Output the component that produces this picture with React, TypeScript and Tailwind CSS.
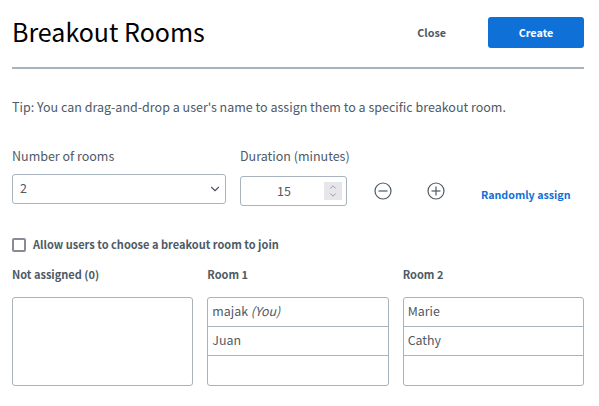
import { ChevronDown, ChevronUp } from "lucide-react";

const font = { fontFamily: '"Noto Sans CJK JP", "Source Sans Pro", "Noto Sans", sans-serif' };

function RoundIcon({ plus = false }: { plus?: boolean }) {
  return (
    <svg width="18" height="18" viewBox="0 0 18 18" fill="none" stroke="#4e5a66" strokeWidth="1.2">
      <circle cx="9" cy="9" r="8" />
      <path d="M4.5 9h9" />
      {plus && <path d="M9 4.5v9" />}
    </svg>
  );
}

function Room({ title, users }: { title: string; users?: React.ReactNode[] }) {
  return (
    <div>
      <div className="text-[11px] leading-[20px] font-bold text-[#4e5a66]">{title}</div>
      <div className="mt-[13px] flex h-[89px] flex-col rounded-[3px] border border-[#a7b3bd]">
        {users?.map((user, i) => (
          <div
            key={i}
            className="flex h-[29px] shrink-0 items-center border-b border-[#a7b3bd] px-[4px] pb-[2px] text-[12.4px] text-[#4e5a66]"
          >
            {user}
          </div>
        ))}
      </div>
    </div>
  );
}

export default function App() {
  return (
    <div className="h-[406px] w-[599px] overflow-hidden bg-white pr-[15px] pl-[12px]" style={font}>
      <header className="flex items-center border-b-2 border-[#a7b3bd] pt-[17px] pb-[19px]">
        <h1 className="-mt-[3px] flex-1 text-[25px] leading-[31px] text-black">Breakout Rooms</h1>
        <button className="mr-[42px] text-[10.8px] font-bold text-[#4e5a66]">Close</button>
        <button className="h-[31px] w-[96px] rounded-[3px] bg-[#0f70d7] text-[10.8px] font-bold text-white">
          Create
        </button>
      </header>

      <p className="mt-[28px] text-[12.5px] leading-[20px] text-[#4e5a66]">
        Tip: You can drag-and-drop a user's name to assign them to a specific breakout room.
      </p>

      <div className="mt-[29px] flex items-start">
        <div className="w-[214px] shrink-0">
          <div className="text-[12.5px] leading-[20px] text-[#4e5a66]">Number of rooms</div>
          <div className="mt-[8px] flex h-[30px] items-center justify-between rounded-[3px] border border-[#a7b3bd] pr-[3px] pl-[7px] text-[12.5px] text-[#4e5a66]">
            <span className="-mt-[1px]">2</span>
            <ChevronDown size={14} strokeWidth={2} />
          </div>
        </div>
        <div className="ml-[14px] w-[107px] shrink-0">
          <div className="text-[12.5px] leading-[20px] whitespace-nowrap text-[#4e5a66]">Duration (minutes)</div>
          <div className="mt-[10px] flex h-[30px] items-center justify-end rounded-[3px] border border-[#a7b3bd] pr-[4px] text-[12.5px] text-[#4e5a66]">
            <span className="mr-[33px]">15</span>
            <span className="flex h-[18px] w-[18px] flex-col items-center justify-center bg-[#e6e6eb] text-[#8a8f96]">
              <ChevronUp size={10} strokeWidth={2} className="-mb-[1px]" />
              <ChevronDown size={10} strokeWidth={2} className="-mt-[1px]" />
            </span>
          </div>
        </div>
        <div className="mt-[36px] ml-[27px] flex shrink-0 gap-[35px]">
          <RoundIcon />
          <RoundIcon plus />
        </div>
        <button className="mt-[39px] ml-[36px] text-[10.7px] leading-[20px] font-bold whitespace-nowrap text-[#0f70d7]">
          Randomly assign
        </button>
      </div>

      <label className="mt-[28px] flex h-[20px] items-center">
        <span className="mt-[1px] h-[14px] w-[14px] rounded-[2px] border-2 border-[#8a8a98]" />
        <span className="ml-[7px] text-[11px] font-bold text-[#4e5a66]">
          Allow users to choose a breakout room to join
        </span>
      </label>

      <div className="mt-[10px] grid grid-cols-3 gap-[14px]">
        <Room title="Not assigned (0)" />
        <Room
          title="Room 1"
          users={[
            <span>
              majak <i>(You)</i>
            </span>,
            "Juan",
          ]}
        />
        <Room title="Room 2" users={["Marie", "Cathy"]} />
      </div>
    </div>
  );
}
